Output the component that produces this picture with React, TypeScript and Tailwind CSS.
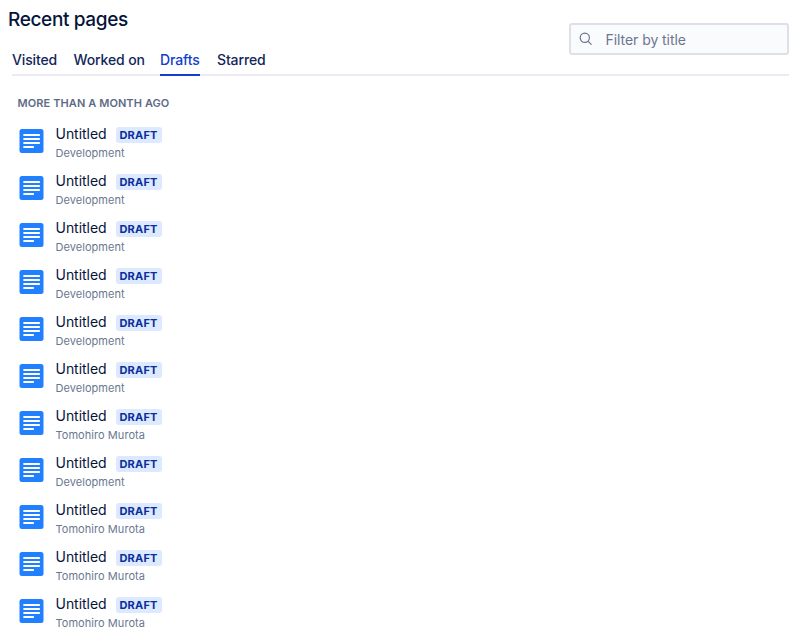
const spaces = [
  'Development', 'Development', 'Development', 'Development', 'Development', 'Development',
  'Tomohiro Murota', 'Development', 'Tomohiro Murota', 'Tomohiro Murota', 'Tomohiro Murota',
];

function PageIcon() {
  return (
    <svg className="mt-[9px] h-6 w-[25px] shrink-0" viewBox="0 0 25 24">
      <rect x="0.5" width="24" height="24" rx="2.5" fill="#2080ff" />
      <path d="M5.1 6.1h15M5.1 10.1h15M5.1 14.1h15M5.1 18.1h9" stroke="#fff" strokeWidth="2" strokeLinecap="round" />
    </svg>
  );
}

export default function App() {
  return (
    <div className="h-[632px] w-[800px] overflow-hidden bg-white font-[Inter,sans-serif] text-[#06143a]">
      <header className="h-[76px] pr-[11px] pl-2">
        <div className="flex h-[46px] justify-between">
          <h1 className="pt-[7px] text-[19px] leading-[26px] font-medium tracking-[-0.36px] whitespace-nowrap">Recent pages</h1>
          <label className="mt-[23px] flex h-8 w-[220px] items-center rounded-[3px] border-2 border-[#dfdfe7] bg-[#fafbfd] pl-2">
            <svg className="size-4" viewBox="0 0 16 16" fill="none" stroke="#6a7791" strokeWidth="1.2" strokeLinecap="round">
              <circle cx="5.8" cy="6.8" r="4.6" />
              <path d="m9.2 10.3 3 3" />
            </svg>
            <span className="ml-[10.5px] pt-px text-[14px] tracking-[-0.06px] text-[#6a7791]">Filter by title</span>
          </label>
        </div>
        <nav className="ml-1 flex h-[30px] gap-4 border-b-2 border-[#ebebf1] text-[14px] leading-7 font-medium tracking-[-0.13px] whitespace-nowrap text-[#12275a]">
          <span className="w-[45px]">Visited</span>
          <span className="w-[71px] pl-[0.5px]">Worked on</span>
          <span className="h-[30px] w-[40px] border-b-2 border-[#1040cc] text-[#1040cc]">Drafts</span>
          <span className="w-[50px] pl-px">Starred</span>
        </nav>
      </header>
      <main className="pl-[19px]">
        <h2 className="-ml-[1.5px] flex h-[44px] items-center pt-[10px] text-[11px] font-semibold tracking-[0.09px] text-[#5d6b86]">MORE THAN A MONTH AGO</h2>
        <ul>
          {spaces.map((space, index) => (
            <li key={index} className="flex h-[47px] gap-[11.5px]">
              <PageIcon />
              <div className="pt-[3px]">
                <div className="flex h-[21px] items-center gap-[9px]">
                  <span className="text-[14px] tracking-[-0.04px]">Untitled</span>
                  <span className="mt-[3px] flex h-4 w-[46px] items-center justify-center rounded-[3px] bg-[#dce9ff] text-[11px] font-bold tracking-[0.2px] text-[#0a2f9c]">DRAFT</span>
                </div>
                <p className="text-[11px] leading-[18px] tracking-[0.05px] text-[#6a7791]">{space}</p>
              </div>
            </li>
          ))}
        </ul>
      </main>
    </div>
  );
}
